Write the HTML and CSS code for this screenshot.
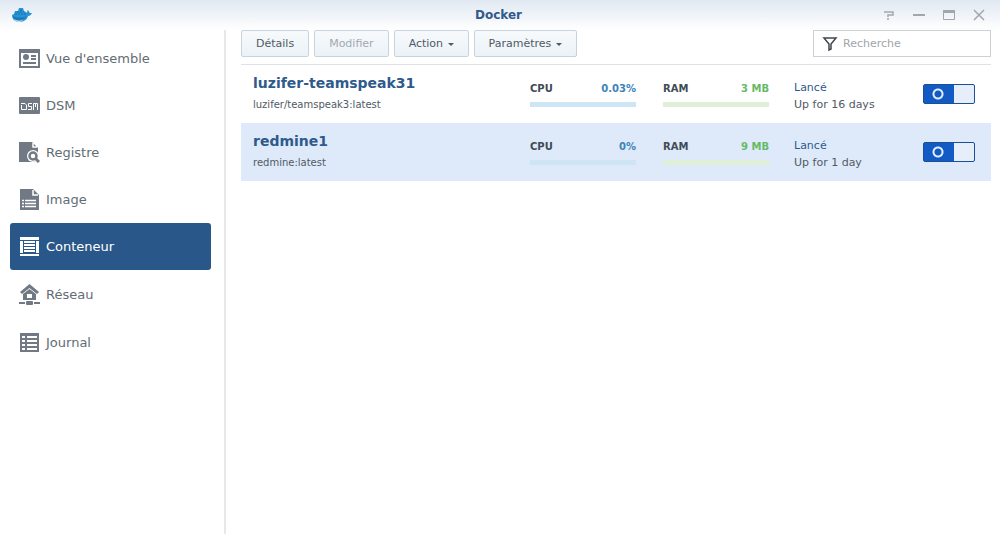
FILE: index.html
```html
<!DOCTYPE html>
<html lang="fr">
<head>
    <meta charset="UTF-8">
    <meta name="viewport" content="width=device-width, initial-scale=1.0">
    <title>Docker</title>
    <link rel="stylesheet" href="styles.css">
</head>
<body>

<header class="titlebar">
    <svg class="logo" viewBox="0 0 20 16" width="20" height="16">
        <path d="M0 8 L2 7 L3 4 L6 4 L7 1 L11 1 L12 4 L14 5 L15 6 C15 5 15 4 16 3 C17 4 17 5 18 6 L20 6 C19 8 18 9 16 9 C15 13 11 15 7 15 C3 15 0 12 0 8 Z" fill="#2a94d2"/>
        <path d="M3 7 H14 M5 5 H12 M8 3 H11" stroke="#1570b0" stroke-width="1" stroke-dasharray="2 1"/>
        <path d="M1 9 C5 11 11 11 15 9 C13 12 9 13 6 13 C3 13 1 11 1 9 Z" fill="#1a79b9"/>
        <path d="M2 12 C5 14 8 14 11 13 C9 16 4 16 2 12 Z" fill="#c4dcec"/>
    </svg>
    <h1>Docker</h1>
    <div class="window-buttons">
        <button type="button" aria-label="Aide">
            <svg viewBox="0 0 12 12" width="12" height="12"><path d="M1 3 H10 V6 H5 V8 M5 9 V11" fill="none" stroke="#a2a7ae" stroke-width="1.500"/></svg>
        </button>
        <button type="button" aria-label="Réduire">
            <svg viewBox="0 0 12 12" width="12" height="12"><path d="M0 6 H12" stroke="#a2a7ae" stroke-width="2"/></svg>
        </button>
        <button type="button" aria-label="Agrandir">
            <svg viewBox="0 0 12 12" width="12" height="12"><path d="M0.500 1.500 H11.500 V10.500 H0.500 Z" fill="none" stroke="#a2a7ae"/><path d="M0 1 H12 V4 H0 Z" fill="#a2a7ae"/></svg>
        </button>
        <button type="button" aria-label="Fermer">
            <svg viewBox="0 0 12 12" width="12" height="12"><path d="M1 1 L11 11 M11 1 L1 11" stroke="#a2a7ae" stroke-width="1.500"/></svg>
        </button>
    </div>
</header>

<div class="content">
    <nav class="sidebar">
        <a href="#overview">
            <svg viewBox="0 0 21 21" width="21" height="21" fill="currentColor">
                <path fill-rule="evenodd" d="M0 1 H21 V20 H0 Z M2 5 V18 H19 V5 Z"/>
                <circle cx="7" cy="9" r="3"/>
                <path d="M12 7 H17 V9 H12 Z M12 10 H17 V12 H12 Z M4 14 H17 V16 H4 Z"/>
            </svg>
            Vue d'ensemble
        </a>
        <a href="#dsm">
            <svg viewBox="0 0 21 21" width="21" height="21">
                <rect y="2" width="21" height="17" rx="1" fill="currentColor"/>
                <path d="M2 8.500 H6 L7.500 10 V14.500 H2.500 V10 M13 8.500 H9.500 V11.500 H12.500 V14.500 H9 M14.500 15 V8.500 H16.500 V12 M16.500 8.500 H18.500 V15" fill="none" stroke="#fff"/>
            </svg>
            DSM
        </a>
        <a href="#registry">
            <svg viewBox="0 0 21 21" width="21" height="21">
                <path d="M0 0 H13 L19 6 V20 H0 Z" fill="currentColor"/>
                <path d="M14 1 V5 H18" fill="none" stroke="#fff" stroke-width="1.500"/>
                <path d="M16 16 L21 21" stroke="#fff" stroke-width="5"/>
                <circle cx="14" cy="14" r="6" fill="#fff"/>
                <circle cx="14" cy="14" r="3.500" fill="none" stroke="currentColor" stroke-width="2.500"/>
                <path d="M16 16 L20 20" stroke="currentColor" stroke-width="3"/>
            </svg>
            Registre
        </a>
        <a href="#image">
            <svg viewBox="0 0 21 21" width="21" height="21">
                <path d="M1 0 H14 L20 6 V21 H1 Z" fill="currentColor"/>
                <path d="M14 1 V6 H19" fill="none" stroke="#fff" stroke-width="1.500"/>
                <path d="M3 11.500 H5 M6 11.500 H17 M3 14.500 H5 M6 14.500 H17 M3 17.500 H5 M6 17.500 H17" stroke="#fff" stroke-width="1.500"/>
            </svg>
            Image
        </a>
        <a href="#container" class="active" aria-current="page">
            <svg viewBox="0 0 21 21" width="21" height="21" fill="currentColor">
                <path d="M1 1 H20 V4 H1 Z M1 5 H4 V17 H1 Z M17 5 H20 V17 H17 Z M1 18 H20 V20 H1 Z M5 5 H16 V7 H5 Z M5 8 H16 V10 H5 Z M5 11 H16 V13 H5 Z M5 14 H16 V16 H5 Z"/>
            </svg>
            Conteneur
        </a>
        <a href="#network">
            <svg viewBox="0 0 21 21" width="21" height="21" fill="currentColor">
                <path d="M10.500 0 L20 8 L18 10 L10.500 4 L3 10 L1 8 Z"/>
                <path fill-rule="evenodd" d="M10.500 5 L17 10 V16 H4 V10 Z M8 10 V14 H13 V10 Z"/>
                <path d="M0 18 H6 V20 H0 Z M15 18 H21 V20 H15 Z"/>
                <rect x="7" y="17" width="7" height="4" rx="1"/>
            </svg>
            Réseau
        </a>
        <a href="#log">
            <svg viewBox="0 0 21 21" width="21" height="21">
                <path d="M1 1 H20 V20 H1 Z" fill="currentColor"/>
                <path d="M3 5 H6 M8 5 H18 M3 9 H6 M8 9 H18 M3 13 H6 M8 13 H18 M3 17 H6 M8 17 H18" stroke="#fff" stroke-width="2"/>
            </svg>
            Journal
        </a>
    </nav>

    <main>
        <div class="toolbar">
            <button type="button">Détails</button>
            <button type="button" disabled>Modifier</button>
            <button type="button">Action <span class="caret"></span></button>
            <button type="button">Paramètres <span class="caret"></span></button>
            <label class="search">
                <svg viewBox="0 0 16 16" width="16" height="16"><path d="M2 2 H14 L9 8 V13 L7 14 V8 Z" fill="none" stroke="#41464d" stroke-width="1.500"/></svg>
                <input type="text" placeholder="Recherche" aria-label="Recherche">
            </label>
        </div>

        <ul class="containers">
            <li>
                <div class="name">
                    <h2>luzifer-teamspeak31</h2>
                    <p>luzifer/teamspeak3:latest</p>
                </div>
                <div class="meter cpu">
                    <span>CPU</span><b>0.03%</b>
                    <div class="bar"></div>
                </div>
                <div class="meter ram">
                    <span>RAM</span><b>3 MB</b>
                    <div class="bar"></div>
                </div>
                <div class="status">
                    <span>Lancé</span>
                    <p>Up for 16 days</p>
                </div>
                <input type="checkbox" class="switch" aria-label="luzifer-teamspeak31" checked>
            </li>
            <li class="selected">
                <div class="name">
                    <h2>redmine1</h2>
                    <p>redmine:latest</p>
                </div>
                <div class="meter cpu">
                    <span>CPU</span><b>0%</b>
                    <div class="bar"></div>
                </div>
                <div class="meter ram">
                    <span>RAM</span><b>9 MB</b>
                    <div class="bar"></div>
                </div>
                <div class="status">
                    <span>Lancé</span>
                    <p>Up for 1 day</p>
                </div>
                <input type="checkbox" class="switch" aria-label="redmine1" checked>
            </li>
        </ul>
    </main>
</div>

</body>
</html>
```
FILE: styles.css
```css
* {
    box-sizing: border-box;
}
body {
    margin: 0;
    min-height: 100vh;
    display: flex;
    flex-direction: column;
    font-family: Verdana, "DejaVu Sans", sans-serif;
    font-size: 11px;
    color: #505a64;
    background: #fff;
}
h1, h2, p, ul {
    margin: 0;
    padding: 0;
}
button, input {
    font-family: inherit;
    font-size: inherit;
}
.titlebar {
    display: grid;
    grid-template-columns: 1fr auto 1fr;
    align-items: center;
    height: 30px;
    padding: 0 15px 0 12px;
    background: linear-gradient(#e0e8f2, #fff);
}
.titlebar h1 {
    font-size: 12px;
    color: #2f5a8c;
}
.window-buttons {
    display: flex;
    justify-content: flex-end;
    gap: 18px;
}
.window-buttons button {
    display: flex;
    padding: 0;
    border: 0;
    background: none;
    cursor: pointer;
}
.content {
    flex: 1;
    display: flex;
}
.sidebar {
    flex: 0 0 226px;
    padding: 5px 13px 0 10px;
    border-right: 2px solid #e6e8ea;
}
.sidebar a {
    display: flex;
    align-items: center;
    gap: 6px;
    height: 47px;
    padding-left: 9px;
    border-radius: 3px;
    font-size: 13px;
    color: #636c75;
    text-decoration: none;
}
.sidebar svg {
    color: #717a84;
}
.sidebar .active,
.sidebar .active svg {
    color: #fff;
}
.sidebar .active {
    background: #2a578a;
}
.sidebar .active ~ a {
    margin-top: 1px;
}
main {
    flex: 1;
    padding: 0 9px 0 15px;
}
.toolbar {
    display: flex;
    gap: 5px;
    padding-bottom: 7px;
    border-bottom: 1px solid #dfe3e8;
}
.toolbar button {
    height: 27px;
    padding: 0 14px;
    border: 1px solid #c8d3de;
    border-radius: 2px;
    color: #505a64;
    background: linear-gradient(#f7fafc, #ebf2f8);
    cursor: pointer;
}
.toolbar button:disabled {
    color: #a3a9b0;
    cursor: default;
}
.caret {
    display: inline-block;
    margin-left: 1px;
    border: 3px solid transparent;
    border-top-color: #505a64;
    border-bottom: 0;
    vertical-align: middle;
}
.search {
    display: flex;
    align-items: center;
    gap: 5px;
    width: 178px;
    height: 27px;
    margin-left: auto;
    padding: 0 8px;
    border: 1px solid #cdd2d8;
}
.search svg {
    flex: none;
}
.search input {
    flex: 1;
    min-width: 0;
    padding: 0;
    border: 0;
    outline: 0;
    background: none;
}
.search input::placeholder {
    color: #a0a5ab;
}
.containers {
    list-style: none;
}
.containers li {
    display: flex;
    height: 58px;
    padding: 0 16px 0 12px;
}
.containers li.selected {
    background: #deeafa;
}
.name {
    flex: 1;
    padding-top: 9px;
}
.name h2 {
    font-size: 14px;
    line-height: 18px;
    color: #2f5a8c;
}
.name p {
    margin-top: 5px;
    font-size: 10px;
    line-height: 16px;
}
.meter {
    display: grid;
    grid-template-columns: auto auto;
    justify-content: space-between;
    align-content: start;
    width: 106px;
    margin-right: 27px;
    padding-top: 17px;
    font-size: 10px;
    line-height: 14px;
}
.meter span {
    font-weight: bold;
    color: #414b55;
}
.bar {
    grid-column: span 2;
    height: 5px;
    margin-top: 6px;
}
.cpu b {
    color: #3b83b8;
}
.cpu .bar {
    background: #cde5f5;
}
.ram b {
    color: #66b966;
}
.ram .bar {
    background: #e0f0d8;
}
.ram {
    margin-right: 25px;
}
.status {
    width: 129px;
    padding-top: 14px;
    line-height: 17px;
}
.status span {
    color: #2f5a8c;
}
.switch {
    appearance: none;
    width: 52px;
    height: 20px;
    margin: 19px 0 0;
    border: 1px solid #1b4f98;
    border-radius: 2px;
    background:
        radial-gradient(circle at 14px 9px, transparent 3px, #e4eefb 4px, #e4eefb 5px, transparent 6px),
        linear-gradient(to right, #125ac4 30px, #e6eefa 30px);
    cursor: pointer;
}
```
